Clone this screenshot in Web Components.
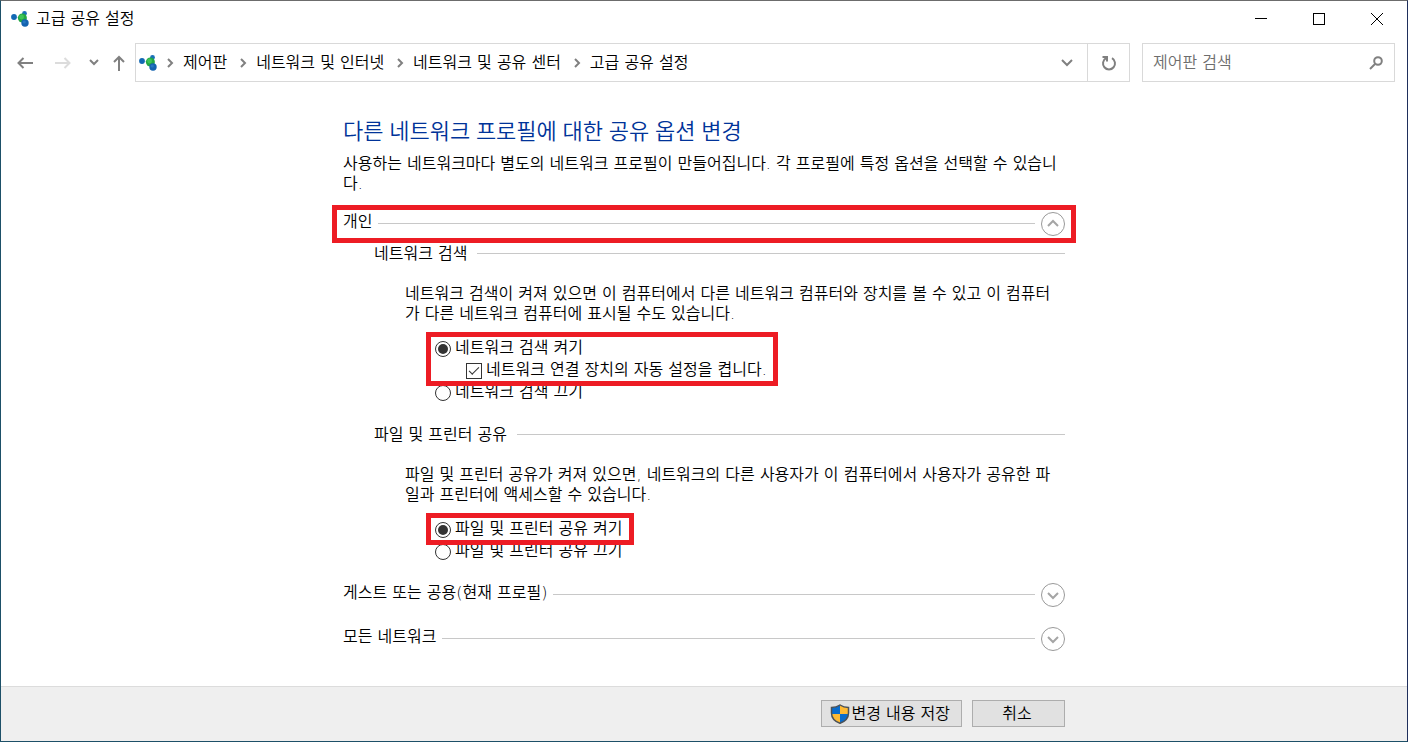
<!DOCTYPE html>
<html lang="ko">
<head>
<meta charset="utf-8">
<title>고급 공유 설정</title>
<style>
    body {
        margin: 0;
        font: 350 16px/20px "DejaVu Sans", "Noto Sans CJK KR", sans-serif;
        color: #000;
    }
</style>
</head>
<body>

<app-window>
    <title-bar slot="top">고급 공유 설정</title-bar>
    <nav-bar slot="top"></nav-bar>

    <page-intro heading="다른 네트워크 프로필에 대한 공유 옵션 변경">사용하는 네트워크마다 별도의 네트워크 프로필이 만들어집니다. 각 프로필에 특정 옵션을 선택할 수 있습니다.</page-intro>

    <profile-section label="개인" open marked>
        <option-group label="네트워크 검색" text="네트워크 검색이 켜져 있으면 이 컴퓨터에서 다른 네트워크 컴퓨터와 장치를 볼 수 있고 이 컴퓨터가 다른 네트워크 컴퓨터에 표시될 수도 있습니다.">
            <marked-box>
                <option-item type="radio" label="네트워크 검색 켜기" checked></option-item>
                <option-item type="checkbox" label="네트워크 연결 장치의 자동 설정을 켭니다." checked></option-item>
            </marked-box>
            <option-item type="radio" label="네트워크 검색 끄기"></option-item>
        </option-group>
        <option-group label="파일 및 프린터 공유" text="파일 및 프린터 공유가 켜져 있으면, 네트워크의 다른 사용자가 이 컴퓨터에서 사용자가 공유한 파일과 프린터에 액세스할 수 있습니다.">
            <marked-box>
                <option-item type="radio" label="파일 및 프린터 공유 켜기" checked></option-item>
            </marked-box>
            <option-item type="radio" label="파일 및 프린터 공유 끄기"></option-item>
        </option-group>
    </profile-section>
    <profile-section label="게스트 또는 공용(현재 프로필)"></profile-section>
    <profile-section label="모든 네트워크"></profile-section>

    <action-bar slot="bottom"></action-bar>
</app-window>

<script>
const networkIcon = `
    <svg class="logo" width="18" height="18" viewBox="0 0 18 18" aria-hidden="true">
        <path d="M3 7L11 8L13 4M11 8L14 13" stroke="#b9d8ea" fill="none"/>
        <circle cx="3" cy="7" r="2.9" fill="#1268b3"/>
        <circle cx="13.5" cy="3.5" r="2.4" fill="#1a70b8"/>
        <circle cx="11.4" cy="8" r="4.5" fill="#23a843"/>
        <circle cx="10.6" cy="7" r="2.4" fill="#3fc558"/>
        <circle cx="14" cy="13" r="3.7" fill="#1463b0"/>
        <circle cx="13.3" cy="12" r="1.6" fill="#2678c0"/>
    </svg>`;

class AppWindow extends HTMLElement {
    constructor() {
        super();
        this.attachShadow({ mode: 'open' });
    }

    connectedCallback() {
        this.shadowRoot.innerHTML = `
            <style>
    :host {
        display: flex;
        flex-direction: column;
        box-sizing: border-box;
        min-height: 100vh;
        background: #fff;
        border: 1px solid #1d5068;
        border-top-color: #6c6c6c;
        border-right-color: #1f2f5c;
    }

    main {
        flex: 1;
        width: 100%;
        max-width: 722px;
        margin: 0 auto;
        padding-top: 34px;
        box-sizing: border-box;
    }
            </style>
            <slot name="top"></slot>
            <main><slot></slot></main>
            <slot name="bottom"></slot>
        `;
    }
}

class TitleBar extends HTMLElement {
    constructor() {
        super();
        this.attachShadow({ mode: 'open' });
    }

    connectedCallback() {
        this.shadowRoot.innerHTML = `
            <style>
    :host {
        display: flex;
        align-items: center;
        height: 36px;
        padding: 0 1px 0 10px;
    }

    .name {
        flex: 1;
        margin-left: 7px;
    }

    button {
        display: flex;
        align-items: center;
        justify-content: center;
        width: 58px;
        height: 36px;
        padding: 0;
        border: none;
        background: none;
    }

    button:hover {
        background: #e5e5e5;
    }

    button path, button rect {
        fill: none;
        stroke: #000;
    }
            </style>
            ${networkIcon}
            <span class="name"><slot></slot></span>
            <button aria-label="최소화"><svg width="12" height="12"><path d="M0 5.5H12"/></svg></button>
            <button aria-label="최대화"><svg width="12" height="12"><rect x=".5" y=".5" width="11" height="11"/></svg></button>
            <button aria-label="닫기"><svg width="12" height="12"><path d="M0 0L12 12M12 0L0 12"/></svg></button>
        `;
    }
}

class NavBar extends HTMLElement {
    constructor() {
        super();
        this.attachShadow({ mode: 'open' });
    }

    connectedCallback() {
        const crumbs = ['제어판', '네트워크 및 인터넷', '네트워크 및 공유 센터', '고급 공유 설정'];
        this.shadowRoot.innerHTML = `
            <style>
    :host {
        display: flex;
        align-items: center;
        padding: 6px 12px 0 5px;
    }

    button {
        display: flex;
        align-items: center;
        justify-content: center;
        height: 37px;
        padding: 0;
        border: none;
        background: none;
    }

    button path, li path, .search path, .search circle {
        fill: none;
        stroke: #808080;
        stroke-width: 2;
    }

    .arrow {
        width: 38px;
    }

    .recent {
        width: 24px;
    }

    .up {
        width: 26px;
        margin-right: 3px;
    }

    .arrow[disabled] path {
        stroke: #dcdcdc;
    }

    .address, .search {
        display: flex;
        align-items: center;
        box-sizing: border-box;
        height: 39px;
        border: 1px solid #d9d9d9;
    }

    .address {
        flex: 1;
        min-width: 0;
        padding-left: 3px;
    }

    .logo {
        flex: none;
    }

    ol {
        display: flex;
        flex: 1;
        gap: 3px;
        min-width: 0;
        margin: 0;
        padding: 0;
        list-style: none;
        white-space: nowrap;
    }

    li {
        display: flex;
        align-items: center;
    }

    li svg {
        margin: 0 9px;
    }

    a {
        color: #000;
        text-decoration: none;
    }

    .history {
        width: 41px;
    }

    .refresh {
        width: 42px;
        border-left: 1px solid #d9d9d9;
    }

    .search {
        width: 253px;
        margin-left: 12px;
        padding: 0 11px 0 10px;
    }

    input {
        flex: 1;
        min-width: 0;
        padding: 0;
        border: none;
        outline: none;
        font: inherit;
    }

    input::placeholder {
        color: #6d6d6d;
    }
            </style>
            <button class="arrow" aria-label="뒤로"><svg width="16" height="12"><path d="M16 6H1.5M6.5 1L1.5 6L6.5 11"/></svg></button>
            <button class="arrow" aria-label="앞으로" disabled><svg width="16" height="12"><path d="M0 6H14.5M9.5 1L14.5 6L9.5 11"/></svg></button>
            <button class="recent" aria-label="최근 위치"><svg width="10" height="7"><path d="M1 1L5 5L9 1"/></svg></button>
            <button class="up" aria-label="위로"><svg width="12" height="16"><path d="M6 16V2M1 7L6 2L11 7"/></svg></button>
            <div class="address">
                ${networkIcon}
                <ol>${crumbs.map(c => `<li><svg width="8" height="10"><path d="M2 1L6 5L2 9"/></svg><a href="#">${c}</a></li>`).join('')}</ol>
                <button class="history" aria-label="이전 위치"><svg width="12" height="8"><path d="M1 1L6 6L11 1"/></svg></button>
                <button class="refresh" aria-label="새로 고침"><svg width="16" height="16"><path d="M11 3.2A6 6 0 1 1 5 3.2M1.5 2H6V6.5"/></svg></button>
            </div>
            <div class="search">
                <input type="text" placeholder="제어판 검색" aria-label="제어판 검색">
                <svg width="14" height="14"><circle cx="9" cy="5" r="3.8"/><path d="M6 8L1 13"/></svg>
            </div>
        `;
    }
}

class PageIntro extends HTMLElement {
    constructor() {
        super();
        this.attachShadow({ mode: 'open' });
    }

    connectedCallback() {
        this.shadowRoot.innerHTML = `
            <style>
    :host {
        display: block;
        margin-bottom: 16px;
    }

    h1 {
        margin: 0 0 10px;
        font: 350 22px/28px "Noto Sans", "Noto Sans CJK KR", sans-serif;
        color: #003399;
    }

    p {
        margin: 0;
    }
            </style>
            <h1>${this.getAttribute('heading')}</h1>
            <p><slot></slot></p>
        `;
    }
}

class ProfileSection extends HTMLElement {
    constructor() {
        super();
        this.attachShadow({ mode: 'open' });
    }

    connectedCallback() {
        this.shadowRoot.innerHTML = `
            <style>
    :host {
        display: block;
        margin-bottom: 16px;
    }

    header {
        display: flex;
        margin: 0 -6px;
        padding: 2px 6px;
        gap: 6px;
    }

    :host([marked]) header {
        outline: 5px solid #ed1c24;
    }

    h2 {
        margin: 0;
        font: inherit;
    }

    .rule {
        flex: 1;
        align-self: center;
        height: 1px;
        margin-bottom: 2px;
        background: #c8c8c8;
    }

    button {
        width: 24px;
        height: 24px;
        padding: 0;
        border: none;
        background: none;
    }

    svg {
        display: block;
    }

    svg circle, svg path {
        fill: none;
        stroke: #999;
    }

    svg path {
        stroke: #a5a5a5;
        stroke-width: 2;
    }

    :host([open]) svg {
        transform: rotate(180deg);
    }

    .body {
        display: none;
        flex-direction: column;
        gap: 22px;
        padding: 6px 0 3px 31px;
    }

    :host([open]) .body {
        display: flex;
    }
            </style>
            <header>
                <h2>${this.getAttribute('label')}</h2>
                <span class="rule"></span>
                <button aria-label="${this.getAttribute('label')}"><svg width="24" height="24"><circle cx="12" cy="12" r="11.5"/><path d="M7 10L12 15L17 10"/></svg></button>
            </header>
            <div class="body"><slot></slot></div>
        `;
        this.shadowRoot.querySelector('button').addEventListener('click', () => this.toggleAttribute('open'));
    }
}

class OptionGroup extends HTMLElement {
    constructor() {
        super();
        this.attachShadow({ mode: 'open' });
    }

    connectedCallback() {
        this.shadowRoot.innerHTML = `
            <style>
    :host {
        display: block;
    }

    header {
        display: flex;
        gap: 10px;
    }

    h3 {
        margin: 0;
        font: inherit;
    }

    .rule {
        flex: 1;
        align-self: center;
        height: 1px;
        margin-bottom: 2px;
        background: #c8c8c8;
    }

    p {
        margin: 20px 0 13px;
        padding: 0 6px 0 31px;
    }

    .options {
        padding-left: 61px;
    }
            </style>
            <header><h3>${this.getAttribute('label')}</h3><span class="rule"></span></header>
            <p>${this.getAttribute('text')}</p>
            <div class="options"><slot></slot></div>
        `;

        // radios live in separate shadow roots, so clear the others by hand
        this.addEventListener('pick', e => {
            this.querySelectorAll('option-item[type=radio]').forEach(el => {
                if (el !== e.target) el.input.checked = false;
            });
        });
    }
}

class MarkedBox extends HTMLElement {
    constructor() {
        super();
        this.attachShadow({ mode: 'open' });
    }

    connectedCallback() {
        this.shadowRoot.innerHTML = `
            <style>
    :host {
        display: block;
        position: relative;
        width: fit-content;
        margin-left: -4px;
        padding: 0 6px 0 4px;
        outline: 5px solid #ed1c24;
    }
            </style>
            <slot></slot>
        `;
    }
}

class OptionItem extends HTMLElement {
    constructor() {
        super();
        this.attachShadow({ mode: 'open' });
    }

    connectedCallback() {
        const type = this.getAttribute('type');
        this.shadowRoot.innerHTML = `
            <style>
    :host {
        display: flex;
        align-items: center;
        height: 22px;
        gap: 4px;
    }

    :host([type=checkbox]) {
        padding-left: 31px;
    }

    input {
        appearance: none;
        display: grid;
        place-items: center;
        flex: none;
        box-sizing: border-box;
        width: 16px;
        height: 16px;
        margin: 2px 0 0;
        border: 1px solid #333;
        background: #fff;
    }

    input[type=radio] {
        border-radius: 50%;
    }

    input[type=radio]:checked::before {
        content: "";
        width: 10px;
        height: 10px;
        border-radius: 50%;
        background: #333;
    }

    input[type=checkbox]:checked::before {
        content: "";
        width: 10px;
        height: 5px;
        margin-bottom: 3px;
        box-sizing: border-box;
        border: solid #333;
        border-width: 0 0 1px 1px;
        transform: rotate(-45deg);
    }
            </style>
            <input type="${type}" id="option" ${this.hasAttribute('checked') ? 'checked' : ''}>
            <label for="option">${this.getAttribute('label')}</label>
        `;
        this.input = this.shadowRoot.querySelector('input');
        if (type === 'radio') {
            this.input.addEventListener('change', () => this.dispatchEvent(new Event('pick', { bubbles: true })));
        }
    }
}

class ActionBar extends HTMLElement {
    constructor() {
        super();
        this.attachShadow({ mode: 'open' });
    }

    connectedCallback() {
        this.shadowRoot.innerHTML = `
            <style>
    :host {
        display: block;
        padding: 13px 0 14px;
        background: #efefef;
        border-top: 1px solid #dcdcdc;
    }

    .row {
        display: flex;
        justify-content: flex-end;
        gap: 10px;
        max-width: 722px;
        margin: 0 auto;
    }

    button {
        display: flex;
        align-items: center;
        justify-content: center;
        gap: 2px;
        box-sizing: border-box;
        height: 27px;
        min-width: 93px;
        padding: 0 11px 0 8px;
        border: 1px solid #adadad;
        background: #e1e1e1;
        font: inherit;
        color: #000;
    }

    button:hover {
        border-color: #0078d7;
        background: #e5f1fb;
    }
            </style>
            <div class="row">
                <button>
                    <svg width="20" height="20" viewBox="0 0 20 20" aria-hidden="true">
                        <path d="M10 1C7 3 4 3.5 1.5 3.5V10H10Z" fill="#0a6ccc"/>
                        <path d="M10 1C13 3 16 3.5 18.5 3.5V10H10Z" fill="#ffba33"/>
                        <path d="M1.5 10C2 14.5 5 17.5 10 19.5V10Z" fill="#ffba33"/>
                        <path d="M18.5 10C18 14.5 15 17.5 10 19.5V10Z" fill="#0a6ccc"/>
                        <path d="M10 1C7 3 4 3.5 1.5 3.5V9C1.5 14 5 17.5 10 19.3C15 17.5 18.5 14 18.5 9V3.5C16 3.5 13 3 10 1Z" fill="none" stroke="#4c5257" stroke-width="1.5"/>
                    </svg>
                    변경 내용 저장
                </button>
                <button>취소</button>
            </div>
        `;
    }
}

customElements.define('app-window', AppWindow);
customElements.define('title-bar', TitleBar);
customElements.define('nav-bar', NavBar);
customElements.define('page-intro', PageIntro);
customElements.define('profile-section', ProfileSection);
customElements.define('option-group', OptionGroup);
customElements.define('marked-box', MarkedBox);
customElements.define('option-item', OptionItem);
customElements.define('action-bar', ActionBar);
</script>
</body>
</html>
